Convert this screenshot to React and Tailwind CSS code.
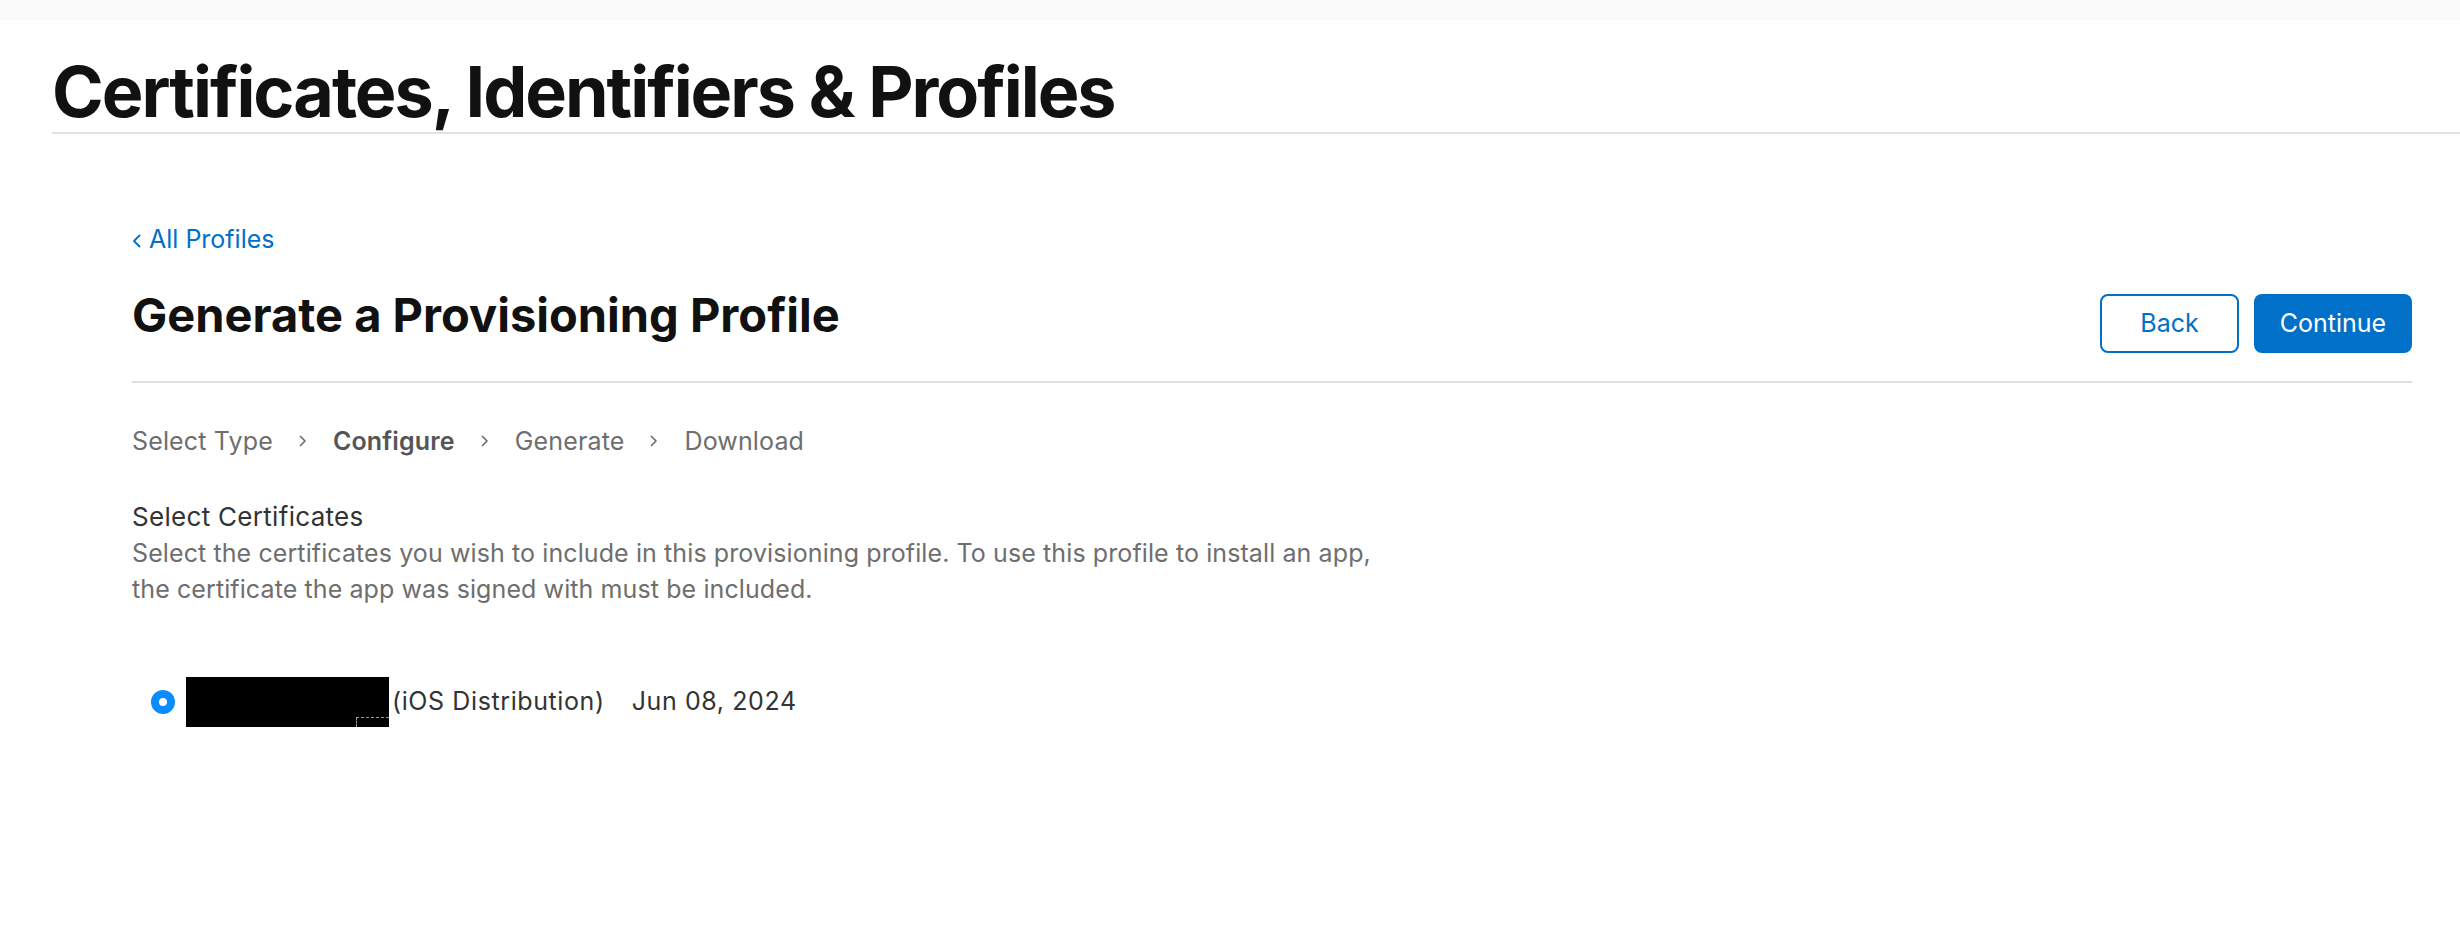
import React from "react";

const Chevron = ({ className = "" }) => (
  <svg viewBox="0 0 8 12" className={className} fill="none">
    <path d="M1.5 1.5 6 6l-4.5 4.5" stroke="currentColor" strokeWidth="1.7" strokeLinecap="round" strokeLinejoin="round" />
  </svg>
);

const steps = [
  { label: "Select Type", active: false },
  { label: "Configure", active: true },
  { label: "Generate", active: false },
  { label: "Download", active: false },
];

const App = () => {
  return (
    <div className="min-h-[942px] bg-white font-['Inter','Noto_Sans',sans-serif] antialiased">
      {/* Top bar */}
      <div className="h-[20px] bg-[#fafafa]" />

      {/* Page title */}
      <div className="pl-[52px]">
        <h1 className="mt-[37px] text-[70px] leading-[70px] font-bold tracking-[-2px] text-[#111]">
          Certificates, Identifiers &amp; Profiles
        </h1>
        <div className="mt-[5px] h-[2px] bg-[#e3e3e3]" />
      </div>

      {/* Content */}
      <div className="pl-[132px] pr-[48px]">
        <a href="#" className="mt-[90px] flex items-center gap-[8px] text-[25px] leading-[30px] text-[#0070c9]">
          <svg viewBox="0 0 9 14" className="w-[9px] h-[14px] mt-[3px]" fill="none">
            <path d="M7.5 1.5 2 7l5.5 5.5" stroke="currentColor" strokeWidth="1.8" strokeLinecap="round" strokeLinejoin="round" />
          </svg>
          All Profiles
        </a>

        {/* Header row */}
        <div className="mt-[33px] flex items-start justify-between">
          <h2 className="text-[47px] leading-[56px] font-bold text-[#111]">
            Generate a Provisioning Profile
          </h2>
          <div className="mt-[7px] flex gap-[15px]">
            <button className="w-[139px] h-[59px] rounded-[8px] border-2 border-[#0070c9] text-[25px] text-[#0070c9] bg-white">
              Back
            </button>
            <button className="w-[158px] h-[59px] rounded-[8px] bg-[#0070c9] text-[25px] text-white">
              Continue
            </button>
          </div>
        </div>
        <div className="mt-[28px] h-[2px] bg-[#e0e0e0]" />

        {/* Steps */}
        <div className="mt-[43px] flex items-center text-[25px] leading-[30px] tracking-[0.15px]">
          {steps.map((s, i) => (
            <React.Fragment key={s.label}>
              {i > 0 && <Chevron className="w-[8px] h-[12px] mx-[26px] text-[#6e6e6e]" />}
              <span className={s.active ? "font-semibold text-[#555]" : "text-[#6e6e6e]"}>{s.label}</span>
            </React.Fragment>
          ))}
        </div>

        {/* Select certificates */}
        <div className="mt-[43px] leading-[36px]">
          <div className="text-[26px] tracking-[0.3px] text-[#333]">Select Certificates</div>
          <p className="max-w-[1262px] text-[25px] tracking-[0.1px] text-[#6e6e6e]">
            Select the certificates you wish to include in this provisioning profile. To use this profile to install an app, the certificate the app was signed with must be included.
          </p>
        </div>

        {/* Certificate list */}
        <div className="mt-[70px] pl-[19px] flex items-center text-[25px] tracking-[0.6px] text-[#333]">
          <span className="w-[24px] h-[24px] rounded-full border-[8px] border-[#0a8cff] bg-white shrink-0" />
          <div className="relative ml-[11px] w-[203px] h-[50px] bg-black shrink-0">
            <div className="absolute right-0 bottom-0 w-[33px] h-[10px] border-t border-l border-dashed border-[#9a9a9a]" />
          </div>
          <span className="ml-[3px]">(iOS Distribution)</span>
          <span className="ml-[27px]">Jun 08, 2024</span>
        </div>
      </div>
    </div>
  );
};

export default App;
